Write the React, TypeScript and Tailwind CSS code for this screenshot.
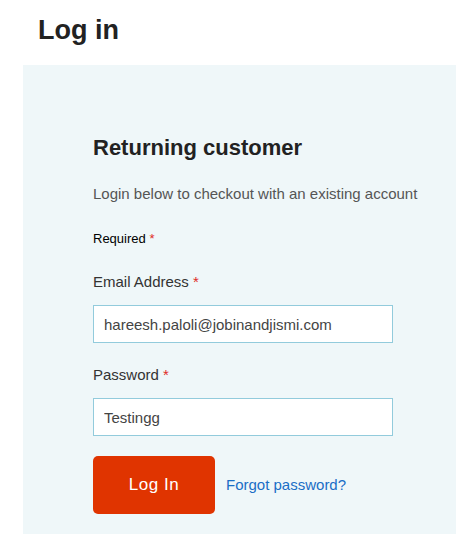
export default function App() {
  return (
    <div className="min-h-[534px] bg-white font-['Liberation_Sans',Arial,sans-serif]">
      <h1 className="pl-[38px] pt-[14px] text-[27px] leading-[32px] font-bold text-[#222]">Log in</h1>

      <div className="ml-[23px] mt-[19px] h-[469px] bg-[#eff7f9] pl-[70px] pt-[69px]">
        <h2 className="text-[22px] leading-[28px] font-bold text-[#222]">Returning customer</h2>
        <p className="mt-[22px] text-[15px] leading-[20px] text-[#555]">
          Login below to checkout with an existing account
        </p>
        <p className="mt-[26px] text-[13px] leading-[18px] text-black">
          Required <span className="text-[#e02b27]">*</span>
        </p>

        <form className="mt-[24px] w-[300px]" onSubmit={e => e.preventDefault()}>
          <label className="block text-[15px] leading-[20px] text-[#333]">
            Email Address <span className="text-[#e02b27]">*</span>
          </label>
          <input
            type="email"
            defaultValue="hareesh.paloli@jobinandjismi.com"
            className="mt-[13px] block h-[38px] w-[300px] border border-[#92cbdc] bg-white px-[10px] text-[15px] text-[#444] outline-none"
          />

          <label className="mt-[22px] block text-[15px] leading-[20px] text-[#333]">
            Password <span className="text-[#e02b27]">*</span>
          </label>
          <input
            type="text"
            defaultValue="Testingg"
            className="mt-[13px] block h-[38px] w-[300px] border border-[#92cbdc] bg-white px-[10px] text-[15px] text-[#444] outline-none"
          />

          <div className="mt-[20px] flex items-center gap-[11px]">
            <button
              type="submit"
              className="h-[58px] w-[122px] rounded-[5px] bg-[#e03400] text-[17px] tracking-[0.5px] text-white"
            >
              Log In
            </button>
            <a href="#" className="text-[15px] text-[#1a6ec6]">Forgot password?</a>
          </div>
        </form>
      </div>
    </div>
  )
}
